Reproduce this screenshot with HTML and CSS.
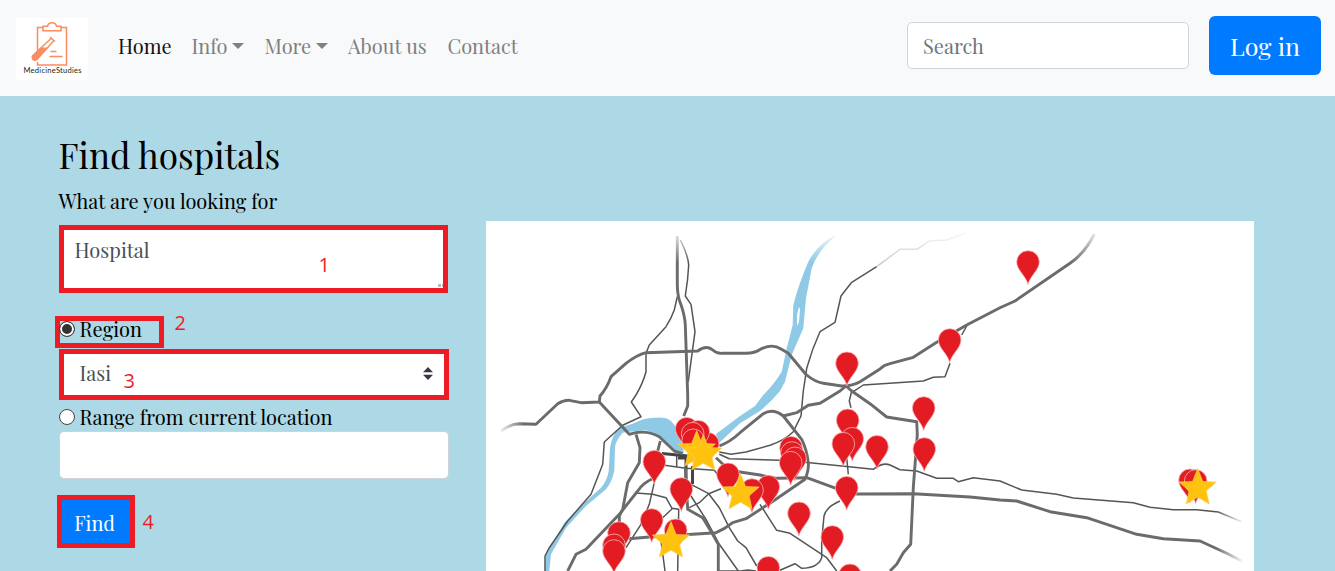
FILE: index.html
```html
<!DOCTYPE html>
<html lang="en">
<head>
<meta charset="utf-8">
<title>MedicineStudies</title>
<link rel="stylesheet" href="styles.css">
</head>
<body>
<header class="navbar">
  <a class="brand" aria-label="MedicineStudies">
    <svg width="72" height="62" viewBox="0 0 72 62">
      <g fill="none" stroke="#fb8b60" stroke-width="1.5">
        <path d="M21.500 33V9.500H27M45 9.500h5.500v37.500h-29V44"/>
        <path d="M27 12.800V8.300h4.500c1-4.600 8-4.600 9 0H45v4.500z"/>
        <path d="M34.500 33.500h6M33.500 38.500h13"/>
        <path d="M34 19l5 4.500M35 20.500L17 37.500c-2 3 1 6 4 4L38 22.500"/>
      </g>
      <path d="M24.500 29.500h7.500L21 41.500c-3 2.500-6.500-.8-4.500-4z" fill="#fb8b60"/>
      <text class="logo-text" x="7.500" y="54.500" textLength="58">MedicineStudies</text>
    </svg>
  </a>
  <nav class="links">
    <a class="link active home">Home</a>
    <a class="link info">Info<i class="caret"></i></a>
    <a class="link more">More<i class="caret"></i></a>
    <a class="link about">About us</a>
    <a class="link contact">Contact</a>
  </nav>
  <input class="search" type="text" placeholder="Search">
  <button class="login">Log in</button>
</header>

<main class="page">
  <section class="finder">
    <h1 class="title">Find hospitals</h1>
    <div class="label">What are you looking for</div>
    <div class="box what">Hospital
      <span class="mark mark-1">1</span>
      <i class="grip"></i>
    </div>
    <div class="region">
      <i class="radio checked"></i><span>Region</span>
      <span class="mark mark-2">2</span>
    </div>
    <div class="box select"><span>Iasi</span>
      <svg width="10" height="13" viewBox="0 0 10 13"><path d="M0 5.200L5 0l5 5.200zM0 7.800h10L5 13z" fill="#343a40"/></svg>
      <span class="mark mark-3">3</span>
    </div>
    <div class="range"><i class="radio"></i><span>Range from current location</span></div>
    <input class="distance" type="text">
    <div class="submit">
      <button class="find">Find</button>
      <span class="mark mark-4">4</span>
    </div>
  </section>

  <svg class="map" width="768" height="350" viewBox="486 221 768 350">
    <defs>
      <path id="pin" d="M0 22.500C-2 14-11.300 8-11.300 0a11.300 11.300 0 0 1 22.600 0C11.300 8 2 14 0 22.500z"/>
      <path id="star" d="M0-19.500L5.100-6.500 18.700-6 8.600 2.900 11.600 16 0 9.200-11.600 16-8.600 2.900-18.700-6-5.100-6.500z"/>
      <linearGradient id="fadeTop" x2="0" y2="1"><stop offset="0" stop-color="#fff"/><stop offset="1" stop-color="#fff" stop-opacity="0"/></linearGradient>
      <linearGradient id="fadeLeft"><stop offset="0" stop-color="#fff"/><stop offset="1" stop-color="#fff" stop-opacity="0"/></linearGradient>
      <linearGradient id="fadeRight"><stop offset="0" stop-color="#fff" stop-opacity="0"/><stop offset="1" stop-color="#fff"/></linearGradient>
    </defs>
    <rect x="486" y="221" width="768" height="350" fill="#fff"/>

    <g class="river">
      <path d="M836.700 235Q818 243 808.300 261.700 798 286 793.300 305L792.700 325 786.700 348.300 781.700 371.700Q775 383 763.300 395L755 406 740 416 716 434 719 443 740 423.300 760 411Q772 401 780 391L785 381.700 791.700 355 803.300 328.300 806 298.300 811.700 268.300Q818 250 836.700 235z"/>
      <path d="M619.300 427.700L632.700 423.700Q645 417 656 417.700 666 417 671 421L679.300 431 684 453 672.700 450 659.300 436 646 430.300 629.300 431.700 622.700 432.700Q616 440 615 447L614.300 471Q612 482 606 489.300L586 506 566 527.700 551 554.300 549.300 571H545L546 554.300 564.300 522.700 582.700 504.300 601 487.700Q607 481 608.700 471L610 447.700Q612 435 619.300 427.700z"/>
    </g>
    <path d="M799 307l-2 8 0 11 2-4 1-13z" fill="#fff"/>

    <g class="road minor">
      <path d="M680.300 240Q688 255 688.700 265 688 280 685.300 296L691 304.300 695 331.700 688.300 381.700"/>
      <path d="M677.300 296.700L674.300 310Q671 319 666 326.700L649.300 345 646 353.300V371.700Q643 383 636 395L631.300 402 641 416.700 622.700 425.300 604.300 442 602.700 464.300 591 494.300 567.700 521 549.300 547.700 545 556V571"/>
      <path d="M654.300 482.700L649.300 504.300 641 524.300 626 547.700"/>
      <path d="M636 493L652.700 494.300 666 497.700 672 508.300 678.700 509.300 677.700 571M662.700 517.700L672.700 508.300M661 541L665 571"/>
      <path d="M719.300 454.300L729.300 458.700 780 460.300 810 462.700 873.300 469.300Q883 462 890 465L900 469.700 916.700 471 936.700 478.300H953.300L958.300 481.700 973.300 477.700 1000 481 1021.700 490 1056.700 494.300 1073.300 498 1133.300 502.700 1150 507.300 1173.300 509.700H1196.700L1218.300 512 1241.700 521.700"/>
      <path d="M719.300 452L731 454.300 746 452 770 445.300Q785 440 793.300 431.700L801 416 803.300 391 806.700 368.300Q812 349 820 331.700L835 322.300 841 296 851.700 282.300 876.700 266.700"/>
      <path class="pale" d="M876.700 266.700L900 249.300H916.700L930 240.700 946.700 240 966 233"/>
      <path d="M853.300 391.700L863.300 385 923.300 381 933.300 377.300 945 376.700 950 363.300M961.700 335L967.300 325"/>
      <path d="M851.700 391L849.300 401 851 407.700M846.700 457.700L848.300 474.300"/>
      <path d="M840 501Q826 507 824 516L821.700 541V557.700Q818 568 801.700 568.300L795 563.700 780 570.300"/>
      <path d="M760 504.300L776.700 530.300 790 533.300 826.700 557.700 836.700 571"/>
      <path d="M691 484.300L708.700 493.700 719.300 507.700 729.300 527.700 737.700 541 746 547.700 756.700 566"/>
      <path d="M691 496L706 519.300 719.300 544.300 738.300 571M718 571h22l8-1 8 1"/>
      <path d="M689.300 507.700L699.300 502.700 708.700 493.700 721 488.700"/>
      <path d="M662.700 465L686 468.300 714.300 470.300 719 476M676.700 455V467M692 468V484"/>
    </g>
    <path class="road center" d="M662 453.500L688 456M686 456V492M692.500 466V484M678 458h9"/>

    <g class="road major">
      <path d="M677.300 236V285Q677.500 294 679.300 300 685 315 685.300 325L687.700 395V406L683.700 416"/>
      <path d="M501 431Q510 424 519.300 423.700L536 424.300 557.700 403.700Q564 400 569.300 400.300L581 402.700 599.300 402 600 396Q607 388 611 376.700L626 363.300Q637 355 646 352.700L697.700 351Q706 345 712 349.500 717 354 722.700 353.300H746Q755 353 760 349.500 772 343 781 349L788.300 353.300 806 374.500Q815 382 823.300 383.300L840 385.700Q850 387 860 381.700L880 369Q884 365 890 363.700L913.300 357.300 936.700 342.300 966.700 325 1000 307.700 1015 301 1070 263.300Q1085 253 1094.300 234"/>
      <path d="M599.300 402L629.300 434.300Q645 429 659.300 436.700L674.300 451 682.700 453.700"/>
      <path d="M636 434.300L640 447.700 639.300 462.700 627.700 482.700 622.700 509.300 619.300 516V524M660.300 441L657.700 451"/>
      <path d="M652 479Q643 483 637.700 491L619.300 514.300 586 549.300 576 554.300 567.700 571"/>
      <path d="M629.300 538.700L649.300 537 716 532.700Q725 529 732.700 522.700L746 518.700 773.300 501 805 479.300Q809 470 808.300 462.700 807 450 801.700 439.300L783.300 416Q773 408 763.300 413.700L740 432.700Q730 442 719.300 446"/>
      <path d="M783.300 416L796.700 412.700 808.300 405.300 820 403.300 840 391 846 386 851.700 391 870 403.700 886.700 417 916.700 421.700 917.300 434.300 913.300 487.700 910.700 544.300 903.300 552.700 896.700 564.300 890 571"/>
      <path d="M716 457.700L726 467 740 472 760 475 776.700 478.300 806.700 477.700 836.700 488.700 856.700 494 913.300 493.700 970 497 1000 500 1016.700 501 1050 511.700 1086.700 517.700 1136.700 534.300 1163.300 538.700 1200 541 1226.700 553.300 1243.300 561.700"/>
      <path d="M685.300 467.700L687.700 509.300 702.700 517.700 712.700 534.300 718.300 544.300V571"/>
    </g>

    <rect x="650" y="228" width="470" height="35" fill="url(#fadeTop)"/>
    <rect x="498" y="415" width="26" height="20" fill="url(#fadeLeft)"/>
    <rect x="1216" y="505" width="28" height="60" fill="url(#fadeRight)"/>

    <g class="pins">
      <use href="#pin" x="1028" y="262"/><use href="#pin" x="847" y="363.300"/><use href="#pin" x="949.700" y="340"/>
      <use href="#pin" x="923.700" y="408"/><use href="#pin" x="924.300" y="449"/><use href="#pin" x="877" y="446.700"/>
      <use href="#pin" x="847.700" y="420.300"/><use href="#pin" x="852.300" y="438.700"/><use href="#pin" x="843.300" y="443.700"/>
      <use href="#pin" x="791" y="447.700"/><use href="#pin" x="792" y="453"/><use href="#pin" x="795" y="458.300"/><use href="#pin" x="790.700" y="462.700"/>
      <use href="#pin" x="846.700" y="487.700"/><use href="#pin" x="799" y="513.300"/><use href="#pin" x="832.300" y="537"/>
      <use href="#pin" x="768.300" y="567.700"/><use href="#pin" x="850" y="575.300"/><use href="#pin" x="768.300" y="486.700"/><use href="#pin" x="752" y="490"/>
      <use href="#pin" x="654.300" y="461.700"/><use href="#pin" x="681.300" y="489"/><use href="#pin" x="651.700" y="520"/><use href="#pin" x="675.700" y="530.300"/>
      <use href="#pin" x="619" y="533"/><use href="#pin" x="614" y="545.300"/><use href="#pin" x="614" y="551"/><use href="#pin" x="728" y="474.300"/>
      <use href="#pin" x="686.700" y="428.700"/><use href="#pin" x="707.700" y="443.700"/><use href="#pin" x="698.300" y="431.700"/><use href="#pin" x="692.700" y="433.700"/><use href="#pin" x="693.300" y="440.300"/>
      <use href="#pin" x="1190" y="480.300"/><use href="#pin" x="1195.700" y="481"/>
    </g>
    <g class="stars">
      <use href="#star" x="696.700" y="450"/><use href="#star" x="703.300" y="454"/><use href="#star" x="671" y="541"/>
      <use href="#star" x="740.500" y="493"/><use href="#star" x="1197.700" y="488"/>
    </g>
  </svg>
</main>
</body>
</html>
```
FILE: styles.css
```css
* { box-sizing: border-box; }

body {
  margin: 0;
  height: 571px;
  overflow: hidden;
  background: #add8e6;
  color: #000;
  font: 20px/30px "Playfair Display", "Liberation Serif", serif;
}

input, button { font: inherit; }

/* Top bar */
.navbar {
  display: flex;
  align-items: center;
  height: 96px;
  padding: 0 14px 0 16px;
  background: #f8f9fa;
}
.brand {
  width: 72px;
  height: 62px;
  margin: 2px 30px 0 0;
  background: #fff;
}
.brand svg { display: block; }
.logo-text { font: 7.5px Lato, sans-serif; fill: #222; }
.links { display: flex; flex: 1; padding-bottom: 4px; }
.link { color: #7f8080; white-space: nowrap; }
.active { color: #111; }
.home { width: 73.6px; }
.info { width: 73px; }
.more { width: 83.4px; }
.about { width: 99.4px; }
.caret {
  display: inline-block;
  margin-left: 4.5px;
  vertical-align: 5px;
  border: 6px solid transparent;
  border-top-color: #7f8080;
  border-bottom: 0;
}
.search {
  width: 282px;
  height: 47px;
  margin: 0 20px 5px 0;
  padding: 0 15px;
  border: 1px solid #ced4da;
  border-radius: 5px;
  background: #fff;
}
.search::placeholder { color: #6c757d; opacity: 1; }
.login {
  width: 112px;
  height: 59px;
  margin-bottom: 5px;
  padding: 0;
  border: 0;
  border-radius: 6px;
  background: #007bff;
  color: #fff;
  font-size: 25px;
}

/* Search form and map */
.page {
  display: flex;
  align-items: flex-start;
  gap: 37.4px;
  padding: 37px 0 0 58.6px;
}
.finder { width: 390px; }
.title {
  margin: 0 0 9px;
  font-size: 35.2px;
  font-weight: 400;
  line-height: 44px;
}
.label { margin-bottom: 9px; }
.box {
  position: relative;
  border: 5px solid #ed1c24;
  background: #fff;
  color: #495057;
}
.what { width: 389px; height: 68px; padding: 5px 11px; }
.grip {
  position: absolute;
  right: 0;
  bottom: 1px;
  width: 5px;
  height: 3px;
  background: linear-gradient(90deg, #bbb 3px, #fff 3px 4px, #bbb 4px);
}
.region {
  position: relative;
  display: flex;
  align-items: center;
  width: 109px;
  height: 32px;
  margin: 23px 0 1px -4px;
  padding-bottom: 7px;
  border: 5px solid #ed1c24;
}
.region .radio { margin-left: -1px; }
.radio {
  width: 16px;
  height: 16px;
  margin-right: 5px;
  border: 1px solid #444;
  border-radius: 50%;
  background: #fff;
}
.checked { background: #333; box-shadow: inset 0 0 0 2px #fff; }
.select {
  display: flex;
  align-items: center;
  justify-content: space-between;
  height: 51px;
  padding: 0 11px 2px 16px;
}
.select > span:first-child { padding-bottom: 2px; }
.range {
  display: flex;
  align-items: center;
  height: 31px;
  margin-top: 2px;
  padding-bottom: 2px;
}
.distance {
  display: block;
  width: 390px;
  height: 48px;
  margin-top: -2px;
  border: 1px solid #ced4da;
  border-radius: 5px;
  background: #fff;
}
.submit { position: relative; width: 78px; margin: 16px 0 0 -2px; }
.find {
  display: block;
  width: 78px;
  height: 53px;
  padding: 2px 2px 0 0;
  border: 5px solid #ed1c24;
  background: #007bff;
  color: #fff;
}

/* Numbered callouts */
.mark {
  position: absolute;
  color: #ed1c24;
  font: 20px/24px "Open Sans", sans-serif;
}
.mark-1 { left: 255px; top: 23px; }
.mark-2 { left: 115px; top: -10px; }
.mark-3 { left: 60px; top: 15px; }
.mark-4 { left: 86px; top: 15px; }

.map { display: block; margin-top: 88px; flex: none; }
.river { fill: #8ecae6; }
.road { fill: none; stroke-linejoin: round; }
.minor { stroke: #555; stroke-width: 1.5; }
.major { stroke: #6b6b6b; stroke-width: 2.9; }
.center { stroke: #444; stroke-width: 3; }
.pale { stroke: #ccc; }
.pins { fill: #e31b23; stroke: #f7b5b5; stroke-width: .8; }
.stars { fill: #ffc20e; stroke: #ffd257; stroke-width: .6; }
```
